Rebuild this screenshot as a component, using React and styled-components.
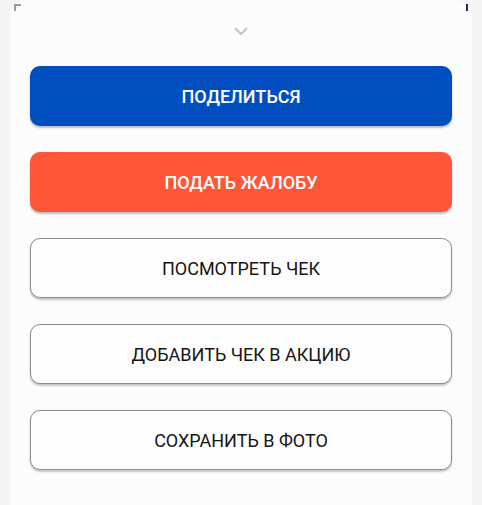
import React from "react";
import styled, { createGlobalStyle } from "styled-components";

const Global = createGlobalStyle`
  html, body { margin: 0; padding: 0; background: #f4f5f4; }
  body { font-family: Roboto, "Noto Sans", sans-serif; }
`;

const Screen = styled.div`
  position: relative;
  width: 482px;
  height: 505px;
  overflow: hidden;
  background: #f4f5f4;
`;

const CornerMark = styled.div`
  position: absolute;
  top: 4px;
  left: 14px;
  width: 7px;
  height: 7px;
  border-top: 2px solid #9a9a9a;
  border-left: 2px solid #9a9a9a;
  box-sizing: border-box;
`;

const RightMark = styled.div`
  position: absolute;
  top: 4px;
  left: 466px;
  width: 2px;
  height: 7px;
  background: #1d2b4a;
`;

const Sheet = styled.div`
  position: relative;
  margin: 0 10px;
  height: 520px;
  background: #fbfcfb;
  border-radius: 16px 16px 0 0;
  padding: 24px 20px 0;
  box-sizing: border-box;
  display: flex;
  flex-direction: column;
  align-items: stretch;
`;

const Handle = styled.div`
  display: flex;
  justify-content: center;
  align-items: flex-start;
  height: 16px;
  padding-top: 2px;
  box-sizing: border-box;
  margin-bottom: 26px;
`;

const List = styled.div`
  display: flex;
  flex-direction: column;
  gap: 26px;
`;

const Button = styled.button`
  height: 60px;
  width: 100%;
  border-radius: 10px;
  font-family: Roboto, "Noto Sans", sans-serif;
  font-size: 18px;
  text-transform: uppercase;
  display: flex;
  align-items: center;
  justify-content: center;
  cursor: pointer;
  box-sizing: border-box;
  ${({ $variant }) =>
    $variant === "primary"
      ? `background: #004fc1; color: #ffffff; border: none; font-weight: 500; box-shadow: 0 1.5px 2px rgba(0,0,0,0.25);`
      : $variant === "danger"
      ? `background: #ff5639; color: #ffffff; border: none; font-weight: 500; box-shadow: 0 1.5px 2px rgba(0,0,0,0.25);`
      : `background: #fdfdfd; color: #151515; border: 1px solid #8c8c8c; font-weight: 400; box-shadow: 0 1.5px 2px rgba(0,0,0,0.22);`}
`;

export default function App() {
  return (
    <Screen>
      <Global />
      <Sheet>
        <Handle>
          <svg width="16" height="10" viewBox="0 0 16 10">
            <path d="M2 2 L8 8 L14 2" fill="none" stroke="#c4c4c4" strokeWidth="2" />
          </svg>
        </Handle>
        <List>
          <Button $variant="primary">Поделиться</Button>
          <Button $variant="danger">Подать жалобу</Button>
          <Button>Посмотреть чек</Button>
          <Button>Добавить чек в акцию</Button>
          <Button>Сохранить в фото</Button>
        </List>
      </Sheet>
      <CornerMark />
      <RightMark />
    </Screen>
  );
}
